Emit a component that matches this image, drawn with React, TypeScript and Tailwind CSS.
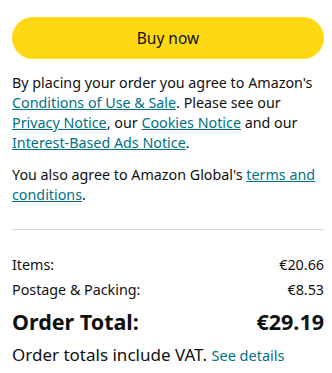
const link = "text-[#007185] underline";

export default function App() {
  return (
    <div className="w-[332px] bg-white pl-3 pr-2 pt-[17px] text-[14.3px] leading-5 text-[#0F1111] [font-family:'Noto_Sans',Arial,sans-serif]">
      <button className="flex h-[42px] w-full items-center justify-center rounded-full bg-[#FFD814] text-[15.5px]">
        Buy now
      </button>

      <p className="mt-[14px]">
        By placing your order you agree to Amazon's{" "}
        <a className={link}>Conditions of Use &amp; Sale</a>. Please see our{" "}
        <a className={link}>Privacy Notice</a>, our{" "}
        <a className={link}>Cookies Notice</a> and our{" "}
        <a className={link}>Interest-Based Ads Notice</a>.
      </p>
      <p className="mt-3">
        You also agree to Amazon Global's{" "}
        <a className={link}>terms and conditions</a>.
      </p>

      <hr className="mt-6 border-t border-[#D5D9D9]" />

      <div className="mt-[25px] space-y-[5px]">
        <div className="flex justify-between">
          <span>Items:</span>
          <span>€20.66</span>
        </div>
        <div className="flex justify-between">
          <span>Postage &amp; Packing:</span>
          <span>€8.53</span>
        </div>
      </div>
      <div className="mt-2 flex justify-between text-[21.5px] font-bold leading-7">
        <span>Order Total:</span>
        <span>€29.19</span>
      </div>
      <p className="mt-[7px] pb-3 text-[17px] leading-6">
        Order totals include VAT.{" "}
        <a className="text-[14.5px] text-[#007185]">See details</a>
      </p>
    </div>
  );
}
